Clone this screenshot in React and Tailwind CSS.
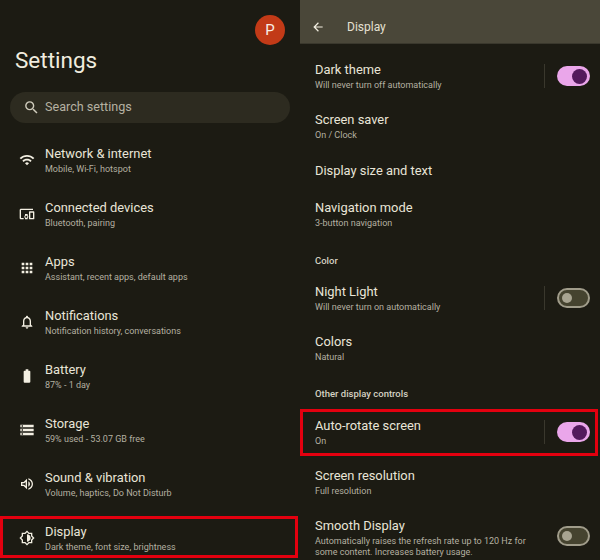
import React from 'react';
import {
  MdWifi,
  MdOutlineDevicesOther,
  MdApps,
  MdOutlineNotifications,
  MdBatteryFull,
  MdStorage,
  MdOutlineVolumeUp,
  MdOutlineBrightness6,
  MdSearch,
  MdArrowBack,
} from 'react-icons/md';

const menu = [
  { icon: MdWifi, title: 'Network & internet', sub: 'Mobile, Wi-Fi, hotspot' },
  { icon: MdOutlineDevicesOther, title: 'Connected devices', sub: 'Bluetooth, pairing' },
  { icon: MdApps, title: 'Apps', sub: 'Assistant, recent apps, default apps' },
  { icon: MdOutlineNotifications, title: 'Notifications', sub: 'Notification history, conversations' },
  { icon: MdBatteryFull, title: 'Battery', sub: '87% - 1 day' },
  { icon: MdStorage, title: 'Storage', sub: '59% used - 53.07 GB free' },
  { icon: MdOutlineVolumeUp, title: 'Sound & vibration', sub: 'Volume, haptics, Do Not Disturb' },
  { icon: MdOutlineBrightness6, title: 'Display', sub: 'Dark theme, font size, brightness', marked: true },
];

function MenuRow({ icon: Icon, title, sub, marked }) {
  return (
    <div className="relative h-[54px] flex items-center pl-[19px]">
      <Icon className="w-[16px] h-[16px] text-[#f3efe2] shrink-0" />
      <div className="ml-[10px]">
        <div className="text-[12.9px] leading-[17px] text-[#e9e5d8]">{title}</div>
        <div className="text-[9px] leading-[13px] mt-[1px] text-[#b4b0a1]">{sub}</div>
      </div>
      {marked && (
        <div className="absolute left-0 right-[2px] top-[5px] bottom-[7px] border-[3px] border-[#e3000f] pointer-events-none" />
      )}
    </div>
  );
}

function Toggle({ on, noDivider }) {
  return (
    <div className="flex items-center shrink-0">
      {!noDivider && <div className="w-px h-[24px] bg-[#3a382d] mr-[12px]" />}
      {on ? (
        <div className="w-[33px] h-[20px] rounded-full bg-[#eaa6ea] flex items-center justify-end pr-[3px]">
          <div className="w-[15px] h-[15px] rounded-full bg-[#53195c]" />
        </div>
      ) : (
        <div className="w-[33px] h-[20px] rounded-full bg-[#45432f] border-2 border-[#a09c8a] flex items-center pl-[3px]">
          <div className="w-[10px] h-[10px] rounded-full bg-[#a8a491]" />
        </div>
      )}
    </div>
  );
}

function SettingRow({ title, sub, toggle, h, marked }) {
  return (
    <div className={`relative flex items-center pl-[15px] pr-[10px] ${h}`}>
      <div className="flex-1">
        <div className="text-[12.9px] leading-[17px] text-[#e9e5d8]">{title}</div>
        {sub && <div className="text-[9px] leading-[13px] mt-[1px] text-[#b4b0a1]">{sub}</div>}
      </div>
      {toggle !== undefined && <Toggle on={toggle} />}
      {marked && (
        <div className="absolute left-0 right-[2px] top-[2px] bottom-[1px] border-[3px] border-[#e3000f] pointer-events-none" />
      )}
    </div>
  );
}

function SectionLabel({ children, h, pb }) {
  return (
    <div className={`pl-[15px] flex items-end text-[9.5px] leading-[14px] font-medium text-[#d5d1c2] ${h} ${pb}`}>
      {children}
    </div>
  );
}

export default function App() {
  return (
    <div className="w-[600px] h-[560px] overflow-hidden flex bg-[#1c1b13] font-['Roboto',sans-serif]">

      {/* LEFT: settings home */}
      <div className="w-[300px] shrink-0">
        <div className="h-[15px]" />
        <div className="flex justify-end pr-[15px]">
          <div className="w-[30px] h-[30px] rounded-full bg-[#c23a17] text-[#f7ede6] text-[15px] flex items-center justify-center">
            P
          </div>
        </div>
        <div className="pl-[15px] h-[32px] text-[22.5px] leading-[30px] text-[#f0ecdf]">Settings</div>
        <div className="h-[15px]" />
        <div className="ml-[10px] mr-[10px] h-[31px] rounded-full bg-[#2d2b20] flex items-center pl-[13px]">
          <MdSearch className="w-[17px] h-[17px] text-[#d0ccbd]" />
          <span className="ml-[5px] text-[12.6px] text-[#b5b1a2]">Search settings</span>
        </div>
        <div className="h-[10px]" />
        {menu.map((item) => (
          <MenuRow key={item.title} {...item} />
        ))}
      </div>

      {/* RIGHT: display page */}
      <div className="w-[300px] shrink-0">
        <div className="h-[44px] pt-[10px] bg-[#4a4739] flex items-center border-b border-[#3a382d]">
          <MdArrowBack className="ml-[11px] w-[14px] h-[14px] text-[#f3efe2]" />
          <span className="ml-[22px] text-[12px] text-[#e4e0d2]">Display</span>
        </div>
        <div className="h-[7px]" />
        <SettingRow h="h-[50px]" title="Dark theme" sub="Will never turn off automatically" toggle={true} />
        <SettingRow h="h-[50px]" title="Screen saver" sub="On / Clock" />
        <SettingRow h="h-[38px]" title="Display size and text" />
        <SettingRow h="h-[51px]" title="Navigation mode" sub="3-button navigation" />
        <SectionLabel h="h-[33px]" pb="pb-[5px]">Color</SectionLabel>
        <SettingRow h="h-[50px]" title="Night Light" sub="Will never turn on automatically" toggle={false} />
        <SettingRow h="h-[50px]" title="Colors" sub="Natural" />
        <SectionLabel h="h-[34px]" pb="pb-[6px]">Other display controls</SectionLabel>
        <SettingRow h="h-[50px]" title="Auto-rotate screen" sub="On" toggle={true} marked />
        <SettingRow h="h-[51px]" title="Screen resolution" sub="Full resolution" />
        <div className="relative flex pl-[15px] pr-[10px] pt-[9px]">
          <div className="flex-1">
            <div className="text-[12.9px] leading-[17px] text-[#e9e5d8]">Smooth Display</div>
            <div className="text-[9px] leading-[11px] mt-[2px] w-[230px] text-[#b4b0a1]">
              Automatically raises the refresh rate up to 120 Hz for some content. Increases battery usage.
            </div>
          </div>
          <div className="pt-[9px]">
            <Toggle on={false} noDivider />
          </div>
        </div>
      </div>
    </div>
  );
}
